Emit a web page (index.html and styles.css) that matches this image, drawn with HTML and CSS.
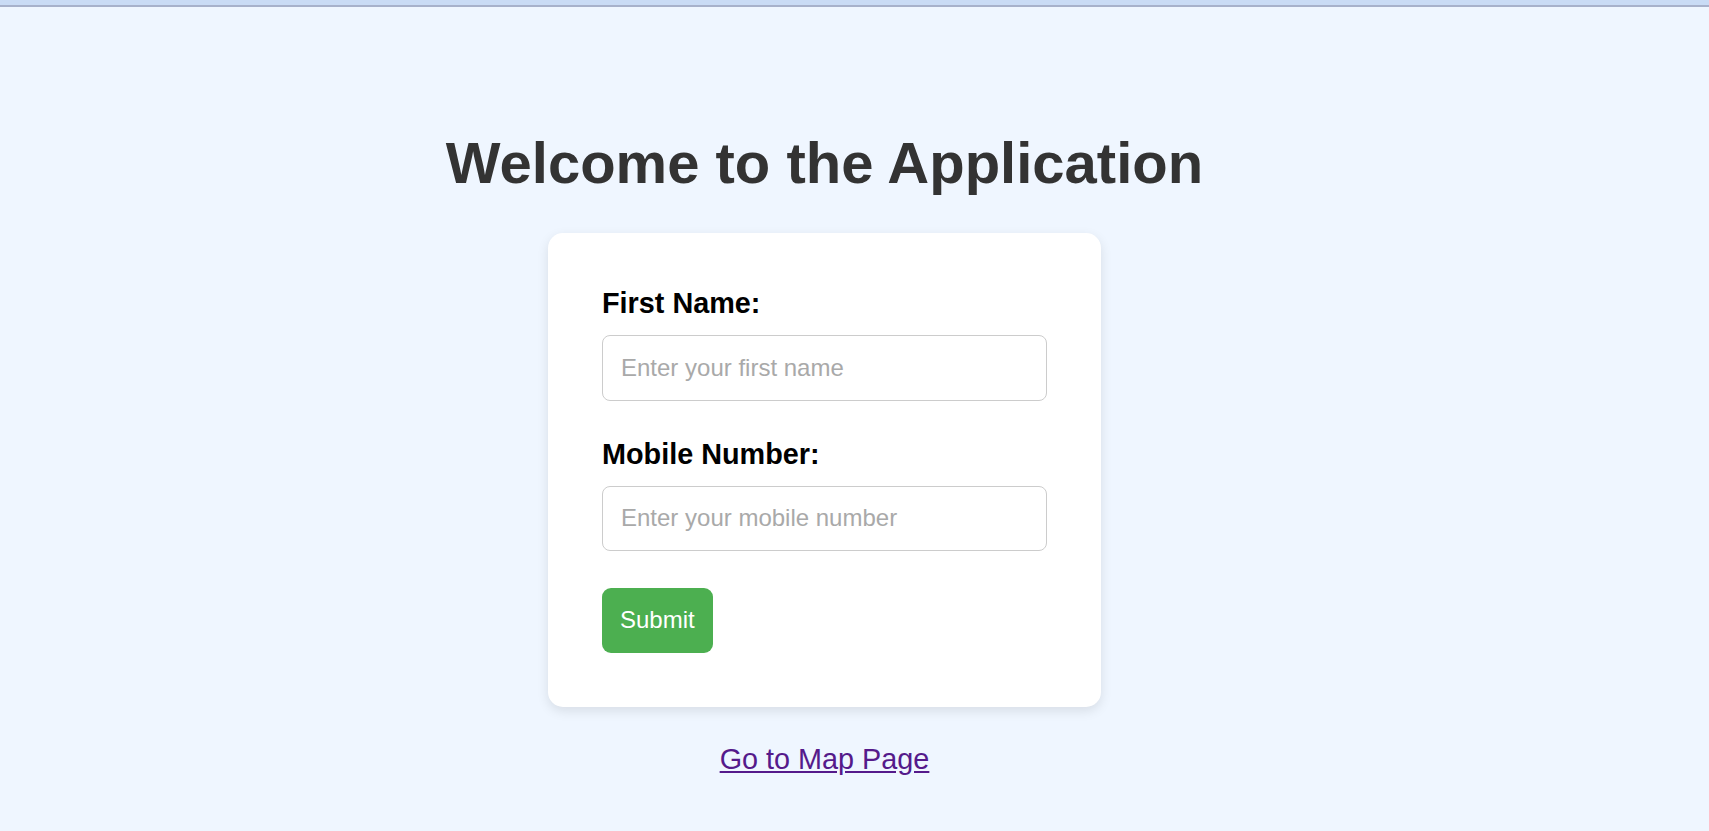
FILE: index.html
```html
<!DOCTYPE html>
<html lang="en">
<head>
<meta charset="utf-8">
<title>Welcome</title>
<link rel="stylesheet" href="styles.css">
</head>
<body>
<div class="topbar"></div>
<main class="page">
  <h1 class="title">Welcome to the Application</h1>
  <form class="card">
    <label class="field-label" for="fname">First Name:</label>
    <input class="field-input" id="fname" type="text" placeholder="Enter your first name">
    <label class="field-label" for="mobile">Mobile Number:</label>
    <input class="field-input" id="mobile" type="text" placeholder="Enter your mobile number">
    <button class="submit-btn" type="button">Submit</button>
  </form>
  <a class="map-link" href="#map">Go to Map Page</a>
</main>
</body>
</html>
```

FILE: styles.css
```css
html, body {
  margin: 0;
  padding: 0;
}
body {
  background: #eff6ff;
  font-family: "Liberation Sans", Arial, sans-serif;
  height: 831px;
  overflow: hidden;
}
.topbar {
  height: 5px;
  background: #c9dbf5;
  border-bottom: 2px solid #a7b1cb;
}
.page {
  width: 1649px;
  display: flex;
  flex-direction: column;
  align-items: center;
}
.title {
  margin: 123px 0 37px;
  font-size: 58px;
  line-height: 66px;
  font-weight: bold;
  color: #333;
}
.card {
  width: 553px;
  box-sizing: border-box;
  padding: 54px;
  background: #fff;
  border-radius: 15px;
  box-shadow: 0 4px 12px rgba(0, 0, 0, 0.1);
  display: flex;
  flex-direction: column;
  align-items: flex-start;
}
.field-label {
  display: block;
  font-size: 28.8px;
  line-height: 33px;
  font-weight: bold;
  color: #000;
  margin-bottom: 15px;
}
.field-input {
  display: block;
  width: 100%;
  height: 65.5px;
  box-sizing: border-box;
  padding: 0 18px;
  border: 1px solid #ccc;
  border-radius: 8px;
  font-family: "Liberation Sans", Arial, sans-serif;
  font-size: 24px;
  color: #333;
  margin: 0 0 37px;
  background: #fff;
  outline: none;
}
.field-input::placeholder {
  color: #a9a9a9;
}
.submit-btn {
  height: 64.5px;
  padding: 0 18px;
  border: none;
  border-radius: 9px;
  background: #4caf50;
  color: #fff;
  font-family: "Liberation Sans", Arial, sans-serif;
  font-size: 24px;
  cursor: pointer;
}
.map-link {
  margin-top: 36px;
  font-size: 28.8px;
  line-height: 33px;
  color: #551a8b;
  text-decoration: underline;
}
```
